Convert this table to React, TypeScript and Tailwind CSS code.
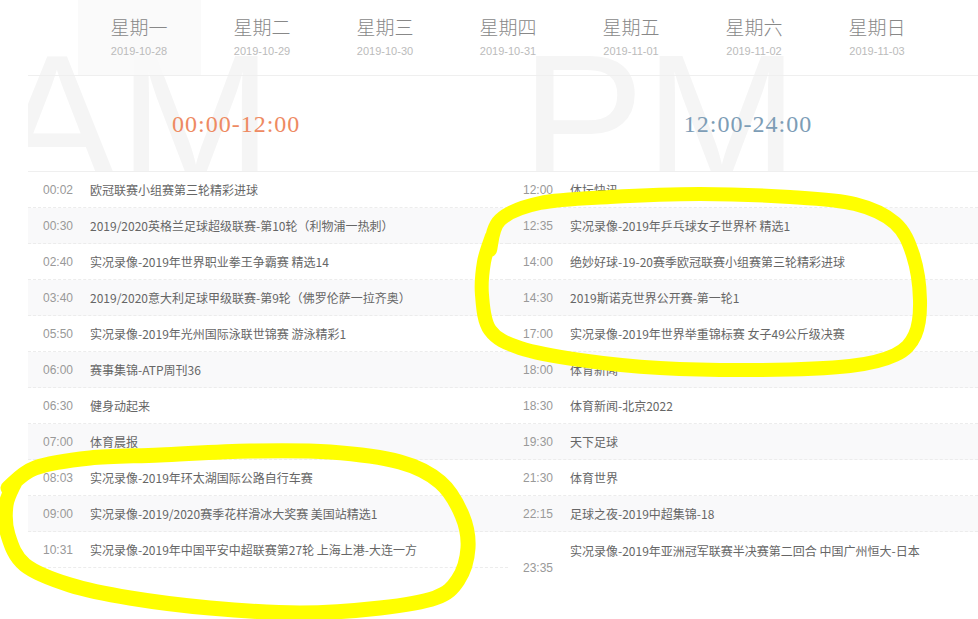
const cjk = "font-['Noto_Sans_CJK_SC',sans-serif]";

const days = [
  { name: "星期一", date: "2019-10-28", active: true },
  { name: "星期二", date: "2019-10-29" },
  { name: "星期三", date: "2019-10-30" },
  { name: "星期四", date: "2019-10-31" },
  { name: "星期五", date: "2019-11-01" },
  { name: "星期六", date: "2019-11-02" },
  { name: "星期日", date: "2019-11-03" },
];

const am = [
  ["00:02", "欧冠联赛小组赛第三轮精彩进球"],
  ["00:30", "2019/2020英格兰足球超级联赛-第10轮（利物浦一热刺）"],
  ["02:40", "实况录像-2019年世界职业拳王争霸赛 精选14"],
  ["03:40", "2019/2020意大利足球甲级联赛-第9轮（佛罗伦萨一拉齐奥）"],
  ["05:50", "实况录像-2019年光州国际泳联世锦赛 游泳精彩1"],
  ["06:00", "赛事集锦-ATP周刊36"],
  ["06:30", "健身动起来"],
  ["07:00", "体育晨报"],
  ["08:03", "实况录像-2019年环太湖国际公路自行车赛"],
  ["09:00", "实况录像-2019/2020赛季花样滑冰大奖赛 美国站精选1"],
  ["10:31", "实况录像-2019年中国平安中超联赛第27轮 上海上港-大连一方"],
];

const pm = [
  ["12:00", "体坛快讯"],
  ["12:35", "实况录像-2019年乒乓球女子世界杯 精选1"],
  ["14:00", "绝妙好球-19-20赛季欧冠联赛小组赛第三轮精彩进球"],
  ["14:30", "2019斯诺克世界公开赛-第一轮1"],
  ["17:00", "实况录像-2019年世界举重锦标赛 女子49公斤级决赛"],
  ["18:00", "体育新闻"],
  ["18:30", "体育新闻-北京2022"],
  ["19:30", "天下足球"],
  ["21:30", "体育世界"],
  ["22:15", "足球之夜-2019中超集锦-18"],
];

// hand-drawn marker loops over the list
const rightLoop: [number, number][] = [
  [490, 250], [500, 220], [540, 203], [610, 197], [700, 194], [790, 197],
  [855, 204], [895, 223], [913, 255], [920, 300], [915, 335], [895, 355],
  [850, 366], [760, 370], [660, 368], [580, 360], [520, 348], [490, 330],
  [482, 295], [484, 262], [492, 236],
];
const leftLoop: [number, number][] = [
  [8, 488], [35, 468], [90, 458], [160, 455], [250, 451], [330, 452],
  [400, 462], [440, 482], [462, 515], [468, 548], [458, 580], [435, 598],
  [380, 608], [300, 613], [210, 608], [130, 598], [70, 585], [25, 565],
  [8, 535], [6, 505], [15, 482],
];

function smooth(points: [number, number][]) {
  const n = points.length;
  let d = `M${points[0][0]},${points[0][1]}`;
  for (let i = 0; i < n - 1; i++) {
    const p0 = points[Math.max(i - 1, 0)];
    const p1 = points[i];
    const p2 = points[i + 1];
    const p3 = points[Math.min(i + 2, n - 1)];
    const c1x = p1[0] + (p2[0] - p0[0]) / 6;
    const c1y = p1[1] + (p2[1] - p0[1]) / 6;
    const c2x = p2[0] - (p3[0] - p1[0]) / 6;
    const c2y = p2[1] - (p3[1] - p1[1]) / 6;
    d += ` C${c1x},${c1y} ${c2x},${c2y} ${p2[0]},${p2[1]}`;
  }
  return d;
}

function Row(props: { time: string; title: string; odd: boolean }) {
  return (
    <div
      className={`flex h-[36px] items-center border-b border-dashed border-[#ececec] pl-[15px] ${
        props.odd ? "bg-[#f9f9fa]" : "bg-white"
      }`}
    >
      <div className="w-[47px] font-['Liberation_Sans',sans-serif] text-[12px] text-[#999]">
        {props.time}
      </div>
      <div className={`${cjk} text-[12px] leading-[16px] text-[#666] whitespace-nowrap`}>
        {props.title}
      </div>
    </div>
  );
}

export default function App() {
  return (
    <div className="relative h-[619px] w-[978px] overflow-hidden bg-white">
      <div className="ml-[28px] w-[960px]">
        <div className="relative overflow-hidden">
          {/* watermark letters, clipped at the section's bottom line */}
          <div className="absolute left-[-33px] top-[28px] h-[143px] overflow-hidden font-['Liberation_Sans',sans-serif] text-[185px] leading-none text-[#f5f5f5] select-none">
            AM
          </div>
          <div className="absolute left-[493px] top-[28px] h-[143px] overflow-hidden font-['Liberation_Sans',sans-serif] text-[185px] leading-none text-[#f5f5f5] select-none">
            PM
          </div>

          <div className="relative flex h-[76px] justify-center border-b border-[#efefef]">
            {days.map((d) => (
              <div
                key={d.date}
                className={`flex w-[123px] flex-col items-center pt-[15px] ${
                  d.active ? "bg-[#fafafa]/90" : ""
                }`}
              >
                <div className={`${cjk} text-[19px] font-light leading-[24px] text-[#888]`}>
                  {d.name}
                </div>
                <div className="mt-[5px] font-['Liberation_Sans',sans-serif] text-[11px] leading-[14px] text-[#bbb]">
                  {d.date}
                </div>
              </div>
            ))}
          </div>

          <div className="relative grid h-[96px] grid-cols-2 border-b border-[#efefef]">
            <div className="flex items-center pl-[144px]">
              <span className="font-['Liberation_Serif',serif] text-[24px] tracking-[1px] text-[#ee8a62]">
                00:00-12:00
              </span>
            </div>
            <div className="flex items-center justify-center">
              <span className="font-['Liberation_Serif',serif] text-[24px] tracking-[1px] text-[#7d9db6]">
                12:00-24:00
              </span>
            </div>
          </div>
        </div>

        <div className="grid grid-cols-2">
          <div>
            {am.map(([t, title], i) => (
              <Row key={t} time={t} title={title} odd={i % 2 === 1} />
            ))}
          </div>
          <div>
            {pm.map(([t, title], i) => (
              <Row key={t} time={t} title={title} odd={i % 2 === 1} />
            ))}
            <div className="flex items-start pl-[15px] pt-[11px]">
              <div className="w-[47px] pt-[17px] font-['Liberation_Sans',sans-serif] text-[12px] leading-[16px] text-[#999]">
                23:35
              </div>
              <div className={`${cjk} text-[12px] leading-[16px] text-[#666] whitespace-nowrap`}>
                实况录像-2019年亚洲冠军联赛半决赛第二回合 中国广州恒大-日本
              </div>
            </div>
          </div>
        </div>
      </div>

      <svg
        className="pointer-events-none absolute inset-0"
        width="978"
        height="619"
        viewBox="0 0 978 619"
      >
        <path
          d={smooth(rightLoop)}
          fill="none"
          stroke="#ffff00"
          strokeWidth="14"
          strokeLinecap="round"
          strokeLinejoin="round"
        />
        <path
          d={smooth(leftLoop)}
          fill="none"
          stroke="#ffff00"
          strokeWidth="15"
          strokeLinecap="round"
          strokeLinejoin="round"
        />
      </svg>
    </div>
  );
}
